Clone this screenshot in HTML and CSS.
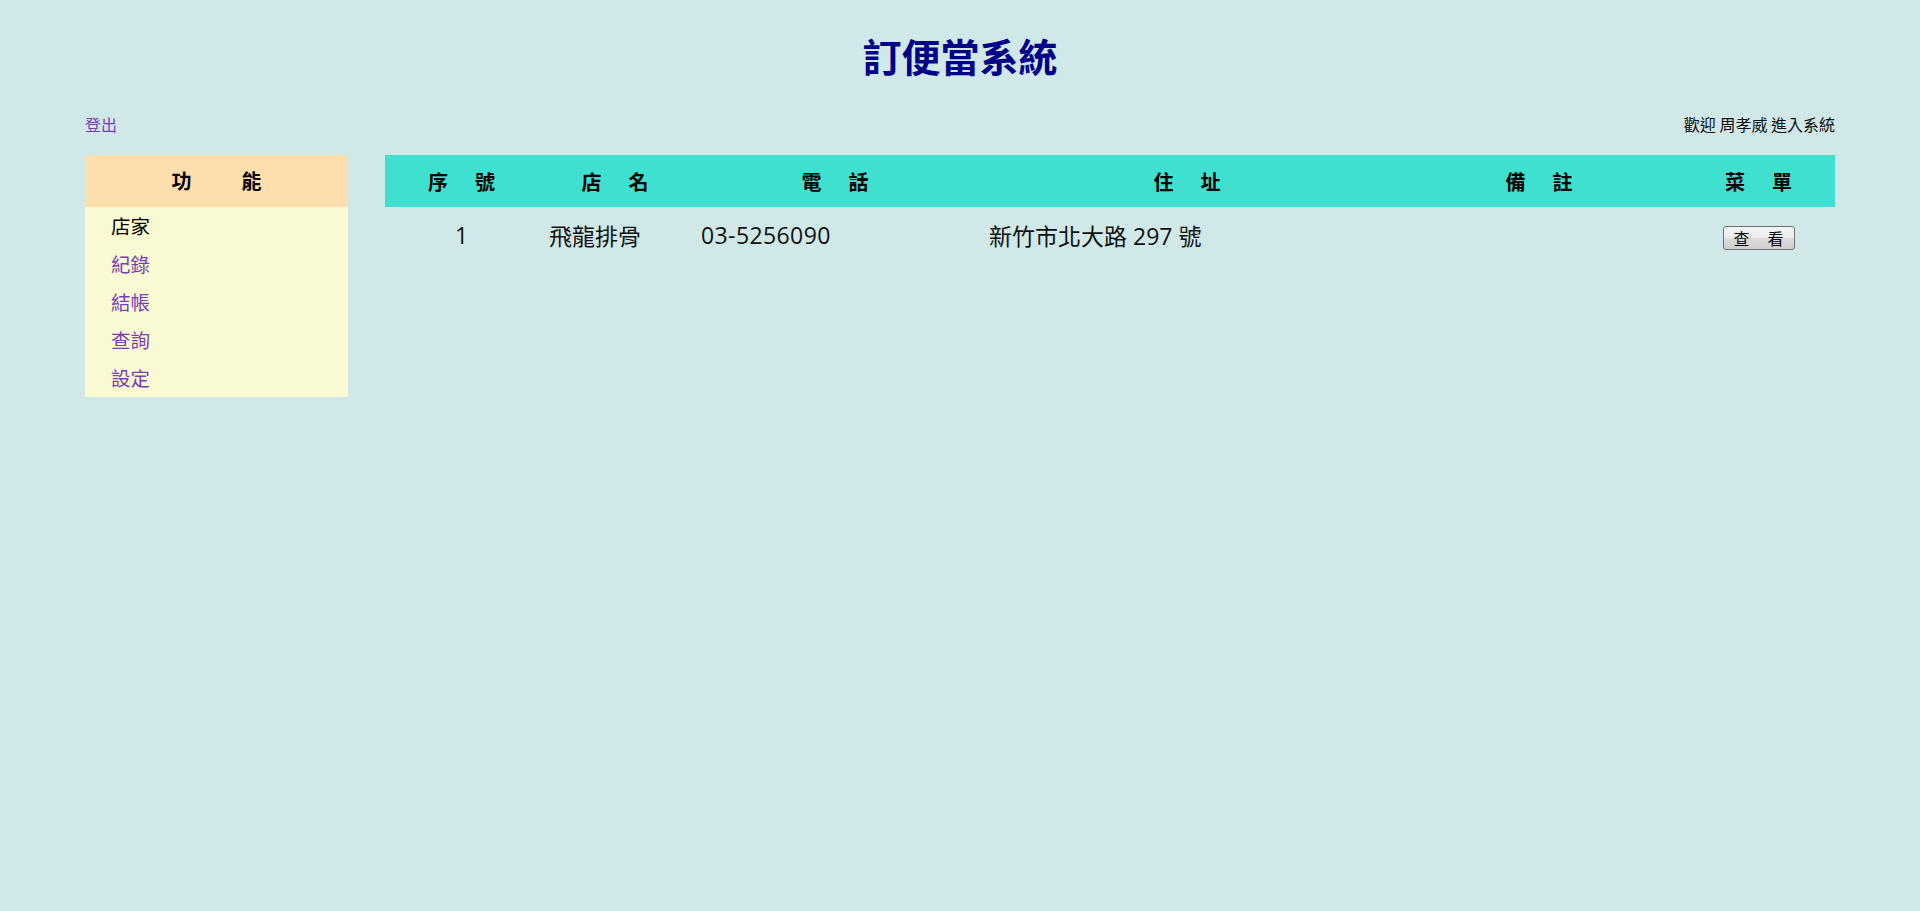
FILE: index.html
```html
<!DOCTYPE html>
<html lang="zh-Hant">
<head>
<meta charset="utf-8">
<title>訂便當系統</title>
<link rel="stylesheet" href="styles.css">
</head>
<body>
<header class="title-wrap">
  <h1 class="title">訂便當系統</h1>
</header>
<div class="page">
  <div class="topbar">
    <a class="link" href="#">登出</a>
    <span class="welcome">歡迎 周孝威 進入系統</span>
  </div>
  <div class="main">
    <nav class="sidebar">
      <div class="side-head">功<span class="gap-side"></span>能</div>
      <ul class="menu">
        <li class="menu-item current">店家</li>
        <li class="menu-item"><a class="link" href="#">紀錄</a></li>
        <li class="menu-item"><a class="link" href="#">結帳</a></li>
        <li class="menu-item"><a class="link" href="#">查詢</a></li>
        <li class="menu-item"><a class="link" href="#">設定</a></li>
      </ul>
    </nav>
    <table class="shops">
      <colgroup>
        <col class="c1"><col class="c2"><col class="c3"><col class="c4"><col class="c5"><col class="c6">
      </colgroup>
      <thead>
        <tr class="head-row">
          <th>序<span class="gap-th"></span>號</th>
          <th>店<span class="gap-th"></span>名</th>
          <th>電<span class="gap-th"></span>話</th>
          <th>住<span class="gap-th"></span>址</th>
          <th>備<span class="gap-th"></span>註</th>
          <th>菜<span class="gap-th"></span>單</th>
        </tr>
      </thead>
      <tbody>
        <tr class="data-row">
          <td class="center">1</td>
          <td>飛龍排骨</td>
          <td class="num">03-5256090</td>
          <td>新竹市北大路 297 號</td>
          <td></td>
          <td class="center"><button class="btn" type="button">查<span class="gap-btn"></span>看</button></td>
        </tr>
      </tbody>
    </table>
  </div>
</div>
</body>
</html>
```

FILE: styles.css
```css
html, body {
  margin: 0;
  padding: 0;
}
body {
  background: #d0e8e8;
  font-family: "Noto Sans CJK TC", "Noto Sans CJK SC", sans-serif;
  color: #000;
  min-height: 911px;
}
.title-wrap {
  padding-top: 32px;
  text-align: center;
}
.title {
  margin: 0;
  font-size: 39px;
  line-height: 46px;
  font-weight: bold;
  color: #000088;
}
.page {
  margin: 36px 85px 0;
}
.topbar {
  display: flex;
  justify-content: space-between;
  font-size: 16px;
  line-height: 20px;
}
.link {
  color: #7a3db8;
  text-decoration: none;
}
.welcome {
  color: #111;
}
.main {
  display: flex;
  align-items: flex-start;
  gap: 37px;
  margin-top: 21px;
}
.sidebar {
  width: 263px;
  flex: none;
  background: #fafad2;
}
.side-head {
  background: #ffdead;
  height: 52px;
  line-height: 52px;
  text-align: center;
  font-size: 20px;
  font-weight: bold;
}
.gap-side {
  display: inline-block;
  width: 50px;
}
.menu {
  list-style: none;
  margin: 0;
  padding: 0;
}
.menu-item {
  font-size: 19.5px;
  line-height: 38px;
  height: 38px;
  padding-left: 26px;
}
.current {
  color: #000;
}
.shops {
  flex: 1;
  border-collapse: collapse;
  table-layout: fixed;
  width: 1450px;
}
.c1 { width: 153px; }
.c2 { width: 154px; }
.c3 { width: 286px; }
.c4 { width: 418px; }
.c5 { width: 286px; }
.c6 { width: 153px; }
.head-row {
  background: #40e0d0;
}
.head-row th {
  height: 52px;
  padding: 0;
  font-size: 20px;
  font-weight: bold;
  text-align: center;
  vertical-align: middle;
}
.gap-th {
  display: inline-block;
  width: 27px;
}
.data-row td {
  height: 56px;
  padding: 0 0 0 11px;
  font-family: "Open Sans", "Noto Sans CJK TC", sans-serif;
  font-size: 23px;
  text-align: left;
  vertical-align: middle;
  color: #111;
}
.data-row td.num {
  padding-left: 9px;
  letter-spacing: 0.4px;
}
.data-row td.center {
  text-align: center;
  padding: 0;
}
.btn {
  width: 72px;
  height: 24px;
  padding: 0;
  border: 1px solid #707070;
  border-radius: 3px;
  background: linear-gradient(#f3f3f3 0%, #ebebeb 50%, #dddddd 50%, #cfcfcf 100%);
  font-family: "Noto Sans CJK TC", sans-serif;
  font-size: 16px;
  line-height: 20px;
  color: #000;
  vertical-align: middle;
}
.gap-btn {
  display: inline-block;
  width: 18px;
}
```
